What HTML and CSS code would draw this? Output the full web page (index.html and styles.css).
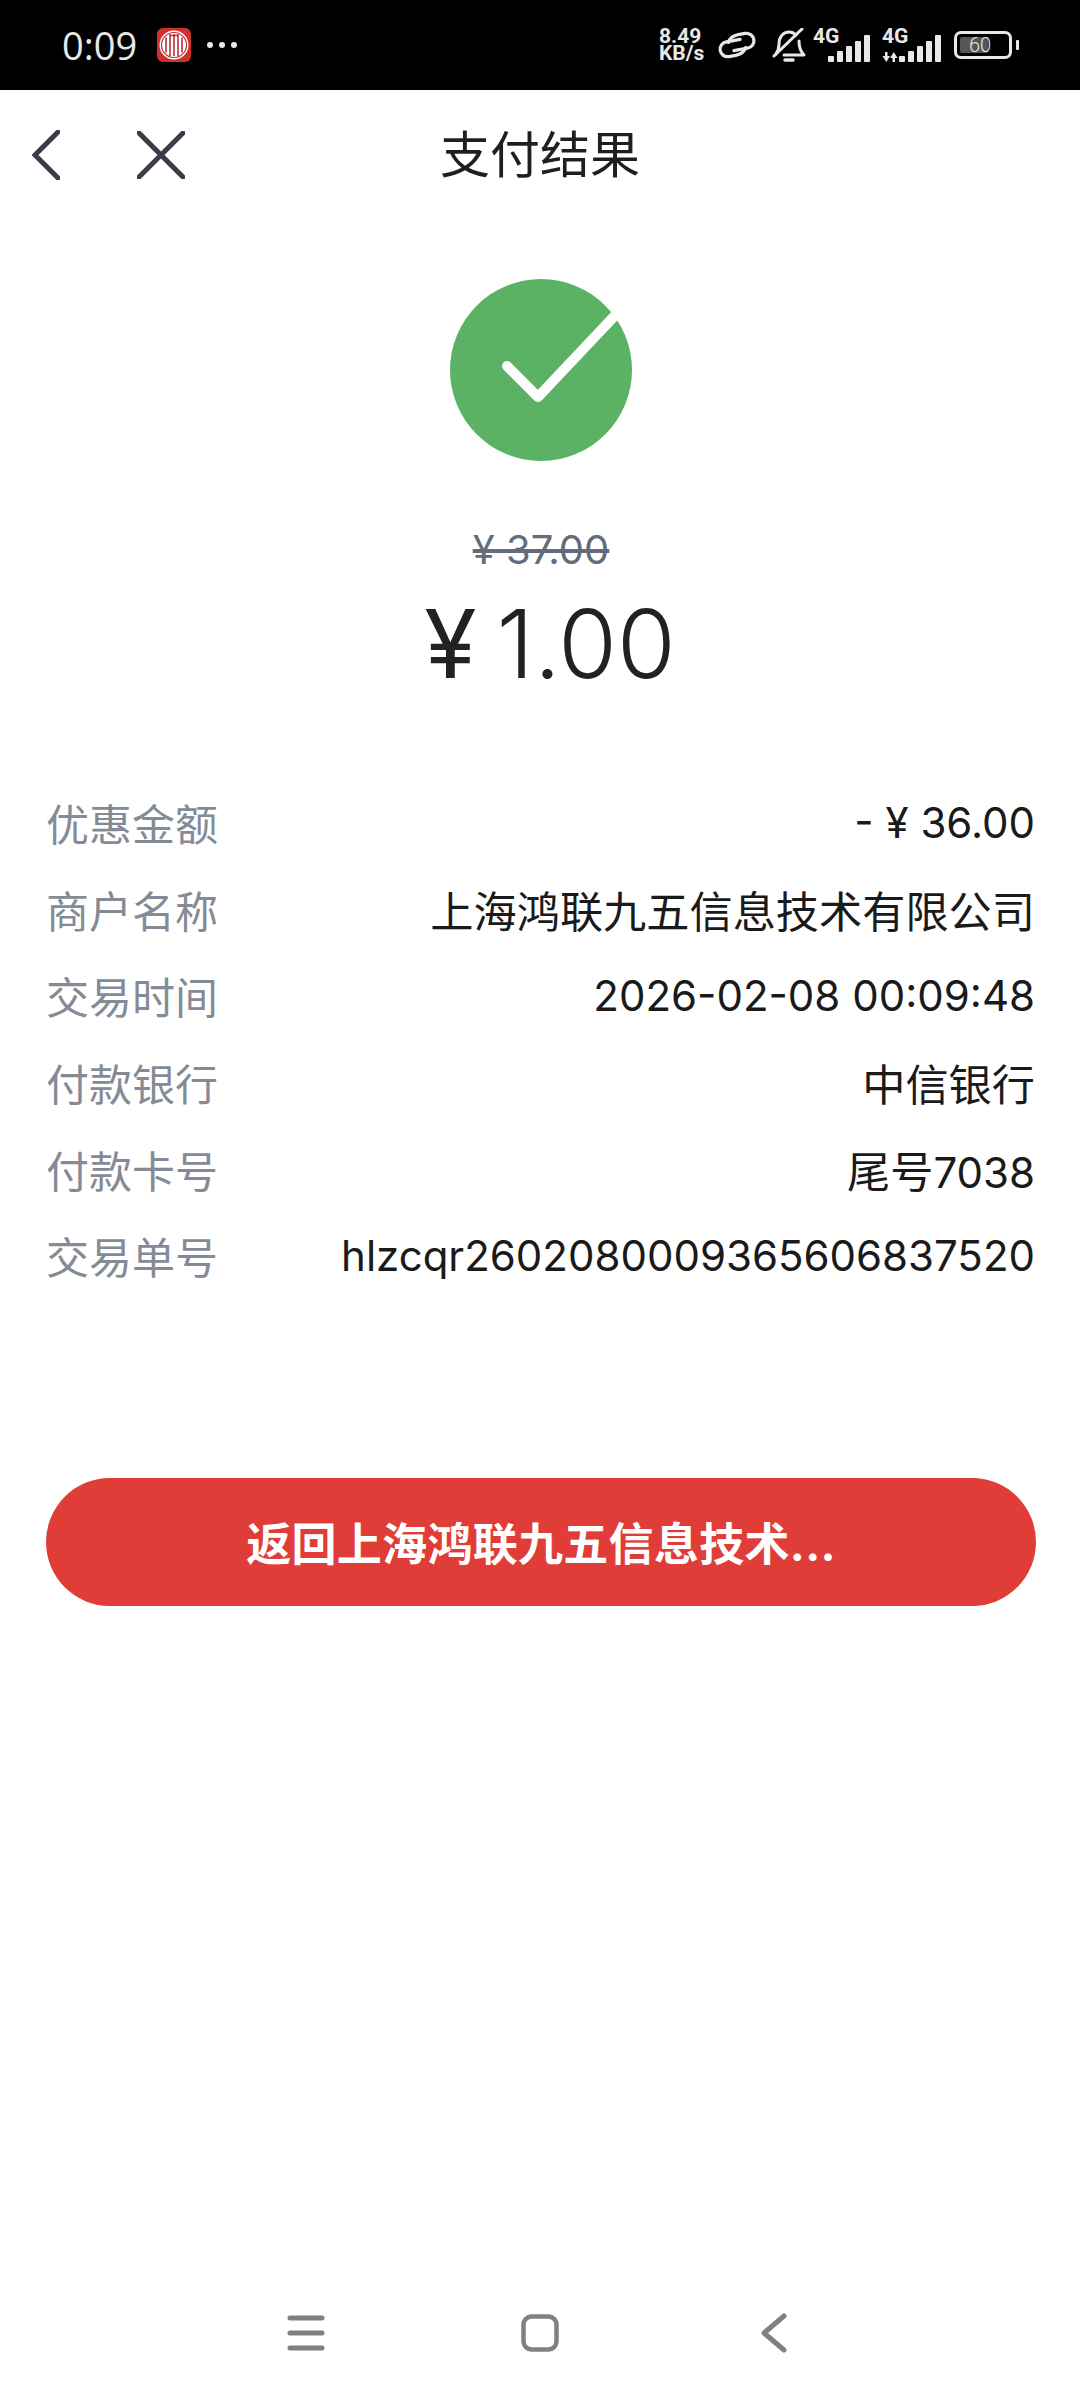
FILE: index.html
```html
<!DOCTYPE html>
<html lang="zh-CN">
<head>
    <meta charset="UTF-8">
    <meta name="viewport" content="width=device-width, initial-scale=1.0">
    <title>支付结果</title>
    <link rel="stylesheet" href="styles.css">
</head>
<body>
    <div class="page">
        <div class="status-bar">
            <div class="status-left">
                <span class="clock">0:09</span>
                <svg class="bank-logo" width="34" height="34" viewBox="0 0 34 34">
                    <rect width="34" height="34" rx="6" fill="#cf3029"/>
                    <circle cx="17" cy="17" r="14.500" fill="#fff"/>
                    <circle cx="17" cy="17" r="12.500" fill="none" stroke="#b8303a" stroke-width="1.200"/>
                    <path d="M9 9.500v15M13 6v22M17 6v22M21 6v22M25 9.500v15M13 7.500h8" fill="none" stroke="#b8303a" stroke-width="1.600"/>
                </svg>
                <span class="dots"><i></i><i></i><i></i></span>
            </div>
            <div class="status-right">
                <span class="speed"><span class="speed-line">8.49</span><span class="speed-line">KB/s</span></span>
                <svg class="ic-link" width="40" height="30" viewBox="0 0 40 30" fill="none" stroke="#e8e8e8" stroke-width="3.200" stroke-linecap="round">
                    <g transform="rotate(-10 20 15)">
                        <path d="M24 10H10a7.500 7.500 0 0 0 0 15h7c5 0 9-2 11-6"/>
                        <path d="M16 20h14a7.500 7.500 0 0 0 0-15h-7c-5 0-9 2-11 6"/>
                    </g>
                </svg>
                <svg class="ic-bell" width="34" height="35" viewBox="0 0 34 35" fill="none" stroke="#e8e8e8" stroke-width="3" stroke-linecap="round" stroke-linejoin="round">
                    <path d="M4 26c2-3 3-6 3-10 0-7 4-12 10-12 3 0 5 1 7 3"/>
                    <path d="M27 13c0 6 1 10 5 14H12"/>
                    <path d="M2 28 30 1"/>
                    <path d="M13 32h8" stroke-width="3.400"/>
                </svg>
                <div class="signal">
                    <span class="net">4G</span>
                    <svg width="42" height="27" viewBox="0 0 42 27" fill="#e8e8e8">
                        <rect x="0" y="21" width="6" height="6" rx="1"/>
                        <rect x="9" y="16" width="6" height="11" rx="1"/>
                        <rect x="18" y="11" width="6" height="16" rx="1"/>
                        <rect x="27" y="6" width="6" height="21" rx="1"/>
                        <rect x="36" y="0" width="6" height="27" rx="1"/>
                    </svg>
                </div>
                <div class="signal signal-data">
                    <span class="net">4G</span>
                    <svg width="59" height="27" viewBox="0 0 59 27" fill="#e8e8e8">
                        <path d="M3 17h2.500v4H8l-3.700 6L.5 21H3z"/>
                        <path d="M10.500 27H13v-4h2.500l-3.700-6L8 23h2.500z"/>
                        <rect x="17" y="21" width="6" height="6" rx="1"/>
                        <rect x="26" y="16" width="6" height="11" rx="1"/>
                        <rect x="35" y="11" width="6" height="16" rx="1"/>
                        <rect x="44" y="6" width="6" height="21" rx="1"/>
                        <rect x="53" y="0" width="6" height="27" rx="1"/>
                    </svg>
                </div>
                <div class="battery">
                    <div class="battery-body"><span class="battery-fill">60</span></div>
                    <i class="battery-nub"></i>
                </div>
            </div>
        </div>

        <div class="nav">
            <div class="nav-icons">
                <svg class="ic-back" width="28" height="50" viewBox="0 0 28 50" fill="none" stroke="#3b3b49" stroke-width="5" stroke-linecap="round" stroke-linejoin="miter">
                    <path d="M26 2 3 25l23 23"/>
                </svg>
                <svg class="ic-close" width="48" height="48" viewBox="0 0 48 48" fill="none" stroke="#3b3b49" stroke-width="5" stroke-linecap="round">
                    <path d="M2 2l44 44M46 2 2 46"/>
                </svg>
            </div>
            <h1>支付结果</h1>
            <div></div>
        </div>

        <div class="result">
            <svg class="ok-icon" width="182" height="182" viewBox="0 0 182 182">
                <circle cx="91" cy="91" r="91" fill="#5bb264"/>
                <path d="M57 87l31 31 85-90" fill="none" stroke="#fff" stroke-width="10" stroke-linecap="round" stroke-linejoin="round"/>
            </svg>
            <div class="old-price">¥ 37.00</div>
            <div class="price"><span class="yen">¥</span>1.00</div>
        </div>

        <div class="details">
            <div class="row"><span class="key">优惠金额</span><span class="val num">- ¥ 36.00</span></div>
            <div class="row"><span class="key">商户名称</span><span class="val">上海鸿联九五信息技术有限公司</span></div>
            <div class="row"><span class="key">交易时间</span><span class="val num">2026-02-08 00:09:48</span></div>
            <div class="row"><span class="key">付款银行</span><span class="val">中信银行</span></div>
            <div class="row"><span class="key">付款卡号</span><span class="val">尾号<span class="num">7038</span></span></div>
            <div class="row"><span class="key">交易单号</span><span class="val num">hlzcqr2602080009365606837520</span></div>
        </div>

        <button class="back-button">返回上海鸿联九五信息技术...</button>

        <div class="sys-nav">
            <svg width="38" height="36" viewBox="0 0 38 36" fill="none" stroke="#808080" stroke-width="5" stroke-linecap="round">
                <path d="M3 3h32M3 18h32M3 33h32"/>
            </svg>
            <svg class="sys-home" width="38" height="38" viewBox="0 0 38 38" fill="none" stroke="#808080" stroke-width="4.500">
                <rect x="2.500" y="2.500" width="33" height="33" rx="8"/>
            </svg>
            <svg width="26" height="40" viewBox="0 0 26 40" fill="none" stroke="#808080" stroke-width="5" stroke-linecap="round" stroke-linejoin="round">
                <path d="M23 3 3 20l20 17"/>
            </svg>
        </div>
    </div>
</body>
</html>
```

FILE: styles.css
```css
* {
    box-sizing: border-box;
}
body {
    margin: 0;
    font-family: Inter, "Noto Sans CJK SC", sans-serif;
    background-color: #ffffff;
    color: #1f1f1f;
}
.page {
    width: 1080px;
    height: 2400px;
    display: flex;
    flex-direction: column;
    overflow: hidden;
}

/* status bar */
.status-bar {
    height: 90px;
    background-color: #000000;
    color: #e8e8e8;
    display: flex;
    justify-content: space-between;
    align-items: center;
    padding: 0 61px 0 62px;
}
.status-left {
    display: flex;
    align-items: center;
}
.clock {
    font-family: "Open Sans", sans-serif;
    font-size: 38px;
    width: 95px;
}
.dots {
    display: flex;
    gap: 6px;
    margin-left: 16px;
}
.dots i {
    width: 6px;
    height: 6px;
    border-radius: 50%;
    background-color: #e8e8e8;
}
.status-right {
    display: flex;
    align-items: center;
}
.speed {
    font-family: Roboto, sans-serif;
    font-size: 21px;
    font-weight: 700;
    width: 58px;
}
.speed-line {
    display: block;
    line-height: 17px;
}
.ic-bell {
    margin-left: 15px;
}
.signal {
    position: relative;
    width: 57px;
    height: 30px;
    margin-left: 7px;
    display: flex;
    justify-content: flex-end;
    align-items: flex-end;
    margin-top: 4px;
}
.signal-data {
    width: 59px;
    margin-left: 12px;
}
.net {
    position: absolute;
    left: 0;
    top: -5px;
    font-family: Roboto, sans-serif;
    font-size: 21px;
    font-weight: 700;
    line-height: 18px;
}
.battery {
    display: flex;
    align-items: center;
    margin-left: 13px;
}
.battery-body {
    width: 58px;
    height: 28px;
    border: 3px solid #e8e8e8;
    border-radius: 7px;
    padding: 3px;
}
.battery-fill {
    display: block;
    width: 28px;
    height: 16px;
    background-color: #555555;
    border-radius: 2px;
    font-family: Roboto, sans-serif;
    font-size: 20px;
    font-weight: 300;
    line-height: 16px;
    text-indent: 9px;
    white-space: nowrap;
}
.battery-nub {
    width: 3px;
    height: 10px;
    background-color: #e8e8e8;
    margin-left: 4px;
    border-radius: 1px;
}

/* top nav */
.nav {
    height: 130px;
    display: grid;
    grid-template-columns: 1fr auto 1fr;
    align-items: center;
}
.nav-icons {
    display: flex;
    align-items: center;
    gap: 77px;
    padding-left: 32px;
}
h1 {
    margin: 0 0 8px;
    font-size: 50px;
    font-weight: 400;
}

/* result */
.result {
    display: flex;
    flex-direction: column;
    align-items: center;
    padding-top: 59px;
    padding-left: 2px;
}
.ok-icon {
    display: block;
}
.old-price {
    margin-top: 65px;
    font-size: 40px;
    line-height: 48px;
    color: #646b7a;
    text-decoration: line-through;
}
.price {
    margin-top: 13px;
    padding-left: 18px;
    font-size: 95px;
    font-weight: 300;
    line-height: 114px;
    color: #222222;
}
.yen {
    margin-right: 20px;
    font-weight: 400;
}

/* details */
.details {
    margin-top: 78px;
    padding: 0 45px 0 46px;
}
.row {
    height: 86.6px;
    display: flex;
    justify-content: space-between;
    align-items: center;
    font-size: 43px;
}
.key {
    color: #858b96;
}
.val {
    font-size: 43.2px;
    color: #1a1a1a;
}
.num {
    font-size: 42px;
}

.back-button {
    display: block;
    width: 990px;
    height: 128px;
    margin: 179px 0 0 46px;
    border: none;
    border-radius: 64px;
    background-color: #e03d38;
    color: #ffffff;
    font-family: inherit;
    font-size: 45px;
    font-weight: 700;
    letter-spacing: 0.3px;
}

.sys-nav {
    margin-top: auto;
    height: 134px;
    display: flex;
    justify-content: center;
    align-items: center;
    gap: 199px;
    padding-right: 7px;
}
.sys-home {
    margin-left: -3px;
    margin-right: 3px;
}
```
